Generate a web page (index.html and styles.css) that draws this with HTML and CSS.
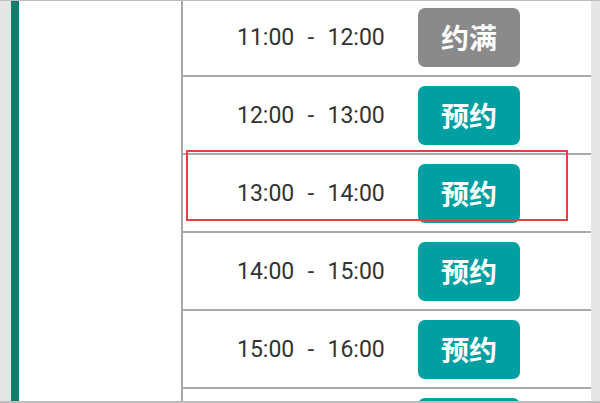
FILE: index.html
```html
<!DOCTYPE html>
<html lang="zh">
<head>
  <meta charset="UTF-8" />
  <meta name="viewport" content="width=device-width, initial-scale=1.0"/>
  <title>预约时段</title>
  <link rel="stylesheet" href="styles.css">
</head>
<body>

<div class="page">
  <!-- 左侧栏 -->
  <aside class="side"></aside>

  <!-- 时段列表 -->
  <section class="slots">
    <div class="slot-list">
      <div class="slot">
        <span class="time">11:00&nbsp;&nbsp;-&nbsp;&nbsp;12:00</span>
        <a class="btn full">约满</a>
      </div>
      <div class="slot">
        <span class="time">12:00&nbsp;&nbsp;-&nbsp;&nbsp;13:00</span>
        <a class="btn">预约</a>
      </div>
      <div class="slot selected">
        <span class="time">13:00&nbsp;&nbsp;-&nbsp;&nbsp;14:00</span>
        <a class="btn">预约</a>
      </div>
      <div class="slot">
        <span class="time">14:00&nbsp;&nbsp;-&nbsp;&nbsp;15:00</span>
        <a class="btn">预约</a>
      </div>
      <div class="slot">
        <span class="time">15:00&nbsp;&nbsp;-&nbsp;&nbsp;16:00</span>
        <a class="btn">预约</a>
      </div>
      <div class="slot">
        <span class="time">16:00&nbsp;&nbsp;-&nbsp;&nbsp;17:00</span>
        <a class="btn">预约</a>
      </div>
    </div>
  </section>
</div>

</body>
</html>
```

FILE: styles.css
```css
/* Reset */
* {
  margin: 0;
  padding: 0;
  box-sizing: border-box;
}

html,
body {
  height: 100%;
  overflow: hidden;
  background: #e6e6e6;
  font-family: Roboto, "Noto Sans CJK SC", sans-serif;
}

/* Каркас */
.page {
  height: 100%;
  display: flex;
  padding: 0 9px 0 11px;
  border-top: 1px solid #bdbdbd;
  border-bottom: 2px solid #bdbdbd;
}

.side {
  width: 170px;
  background: #fff;
  border-left: 8px solid #0a7f6b;
}

.slots {
  flex: 1;
  background: #fff;
  border-left: 2px solid #a8a8a8;
  overflow: hidden;
}

.slot-list {
  margin-top: -2px;
}

/* Строка времени */
.slot {
  position: relative;
  height: 78px;
  display: flex;
  align-items: center;
  padding-left: 54px;
  border-bottom: 2px solid #aaa;
}

.time {
  width: 181px;
  font-size: 23px;
  word-spacing: 1px;
  color: #333;
  white-space: nowrap;
}

.btn {
  width: 102px;
  height: 59px;
  display: flex;
  justify-content: center;
  align-items: center;
  border-radius: 7px;
  background: #00a0a2;
  color: #fff;
  font-family: "Noto Sans CJK SC", sans-serif;
  font-size: 28px;
  font-weight: bold;
}

.btn.full {
  background: #8a8a8a;
}

/* Красная рамка поверх выбранной строки */
.selected::after {
  content: '';
  position: absolute;
  left: 3px;
  top: -5px;
  width: 378px;
  height: 67px;
  border: 2px solid #e34141;
}
```
